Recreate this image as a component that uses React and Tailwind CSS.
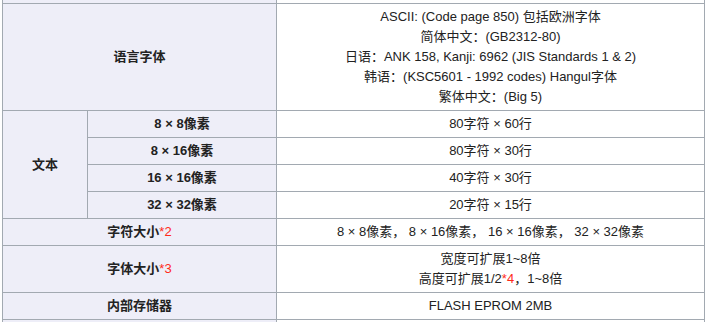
export default function App() {
  const th = "border border-[#a2a9b1] bg-[#eeeef8] font-bold text-center align-middle py-[3px] px-2";
  const td = "border border-[#a2a9b1] bg-white text-center align-middle py-[3px] px-2";
  const red = "text-[#ff2a1a]";
  return (
    <div className="w-[707px] h-[322px] overflow-hidden bg-white">
      <table
        className="table-fixed border-collapse ml-[2px] mt-[-24px] w-[702px] text-[13px] leading-[20px] text-[#222]"
        style={{ fontFamily: '"Liberation Sans", Arial, "Noto Sans CJK SC", sans-serif' }}
      >
        <colgroup>
          <col className="w-[85px]" />
          <col className="w-[189px]" />
          <col className="w-[428px]" />
        </colgroup>
        <tbody>
          <tr className="h-[27px]">
            <th colSpan={2} className={th}>&nbsp;</th>
            <td className={td}>&nbsp;</td>
          </tr>
          <tr>
            <th colSpan={2} className={th}>语言字体</th>
            <td className={td}>
              <div>ASCII: (Code page 850) 包括欧洲字体</div>
              <div>简体中文：(GB2312-80)</div>
              <div>日语：ANK 158, Kanji: 6962 (JIS Standards 1 &amp; 2)</div>
              <div>韩语：(KSC5601 - 1992 codes) Hangul字体</div>
              <div>繁体中文：(Big 5)</div>
            </td>
          </tr>
          <tr>
            <th rowSpan={4} className={th}>文本</th>
            <th className={th}>8 × 8像素</th>
            <td className={td}>80字符 × 60行</td>
          </tr>
          <tr>
            <th className={th}>8 × 16像素</th>
            <td className={td}>80字符 × 30行</td>
          </tr>
          <tr>
            <th className={th}>16 × 16像素</th>
            <td className={td}>40字符 × 30行</td>
          </tr>
          <tr>
            <th className={th}>32 × 32像素</th>
            <td className={td}>20字符 × 15行</td>
          </tr>
          <tr>
            <th colSpan={2} className={th}>
              字符大小<span className={`${red} font-normal`}>*2</span>
            </th>
            <td className={td}>8 × 8像素， 8 × 16像素， 16 × 16像素， 32 × 32像素</td>
          </tr>
          <tr>
            <th colSpan={2} className={th}>
              字体大小<span className={`${red} font-normal`}>*3</span>
            </th>
            <td className={td}>
              <div>宽度可扩展1~8倍</div>
              <div>
                高度可扩展1/2<span className={red}>*4</span>，1~8倍
              </div>
            </td>
          </tr>
          <tr>
            <th colSpan={2} className={th}>内部存储器</th>
            <td className={td}>FLASH EPROM 2MB</td>
          </tr>
          <tr className="h-[27px]">
            <th colSpan={2} className={th}>&nbsp;</th>
            <td className={td}>&nbsp;</td>
          </tr>
        </tbody>
      </table>
    </div>
  );
}
